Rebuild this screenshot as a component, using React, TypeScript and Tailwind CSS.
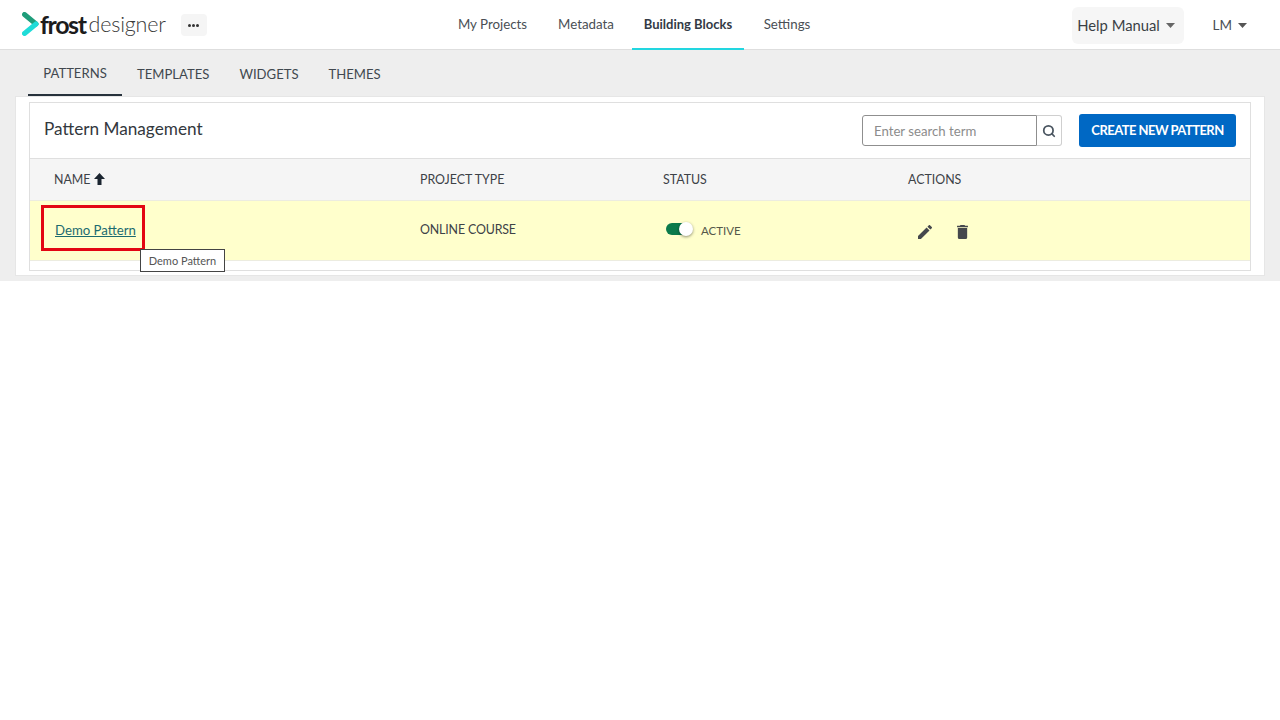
import { Search } from "lucide-react"

const tabs = ["PATTERNS", "TEMPLATES", "WIDGETS", "THEMES"]

const Caret = ({ color }: { color: string }) => (
  <svg width="9" height="5" viewBox="0 0 9 5" className="ml-[6px]">
    <path d="M0 0h9L4.5 5z" fill={color} />
  </svg>
)

const Header = () => (
  <header className="flex h-[50px] items-stretch border-b border-[#dedede] bg-white">
    {/* Logo */}
    <div className="flex w-[446px] items-center pl-[22px]">
      <svg width="17" height="24" viewBox="0 0 17 24" className="mt-[-2px]">
        <path d="M2.5 2.5 L14 12" stroke="#1f9d7a" strokeWidth="5" strokeLinecap="round" fill="none" />
        <path d="M14 12 L2.5 21.5" stroke="#1fdcd8" strokeWidth="5" strokeLinecap="round" fill="none" />
      </svg>
      <span className="ml-[1px] text-[25px] leading-none font-bold tracking-[-1.4px] text-[#1c1c1c]">frost</span>
      <span className="ml-[3px] text-[21.5px] leading-none font-light tracking-[-0.2px] text-[#3a3a3a]">designer</span>
      <span className="ml-[15px] flex h-[22px] w-[26px] items-center justify-center rounded-sm bg-[#f5f5f5]">
        <span className="mt-[2px] flex gap-[1.5px]">
          <i className="h-[2.5px] w-[2.5px] rounded-full bg-[#333]" />
          <i className="h-[2.5px] w-[2.5px] rounded-full bg-[#333]" />
          <i className="h-[2.5px] w-[2.5px] rounded-full bg-[#333]" />
        </span>
      </span>
    </div>
    {/* Main nav */}
    <nav className="flex items-stretch gap-[7px] text-[13.3px] text-[#4a4f55]">
      <a className="flex w-[93px] items-center justify-center">My Projects</a>
      <a className="flex w-[80px] items-center justify-center">Metadata</a>
      <a className="mb-[-1px] ml-[-1px] flex w-[112px] items-center justify-center border-b-2 border-[#22d6e0] pt-[1px] text-[13px] font-bold text-[#333a45]">
        Building Blocks
      </a>
      <a className="ml-[1px] flex w-[70px] items-center justify-center">Settings</a>
    </nav>
    <div className="ml-auto flex items-center pr-[33px]">
      <button className="mt-[1px] flex h-[37px] w-[112px] items-center justify-center rounded-md bg-[#f6f6f6] pt-[1px] pr-[3px] text-[14.8px] text-[#3a3f45]">
        Help Manual
        <Caret color="#666" />
      </button>
      <button className="ml-[29px] flex items-center pt-[1px] text-[13.5px] text-[#4a4f55]">
        LM
        <Caret color="#555" />
      </button>
    </div>
  </header>
)

const App = () => {
  return (
    <div className="min-h-[720px] bg-white font-['Lato',sans-serif]">
      <Header />
      <div className="h-[231px] bg-[#eeeeee] px-[15px]">
        {/* Tabs */}
        <div className="flex h-[46px] pl-[13px] text-[13.1px] text-[#41484f]">
          {tabs.map((t, i) => (
            <a
              key={t}
              className={
                i === 0
                  ? "flex w-[94px] items-center justify-center border-b-2 border-[#27323c] pt-[4px]"
                  : "flex items-center px-[15px] pt-[4px]"
              }
            >
              {t}
            </a>
          ))}
        </div>
        {/* Card */}
        <div className="h-[180px] border border-[#e6e6e6] bg-white px-[13px] pt-[5px]">
          <div className="relative h-[169px] border border-[#dfdfdf]">
            <div className="flex h-[56px] items-center border-b border-[#dfdfdf] px-[14px]">
              <h1 className="mt-[-3px] text-[17.2px] font-normal text-[#33383d]">Pattern Management</h1>
              <div className="mr-[17px] ml-auto flex h-[31px] w-[200px]">
                <input
                  readOnly
                  placeholder="Enter search term"
                  className="h-full w-[175px] rounded-l-[3px] border border-[#8f8f8f] bg-white px-[11px] text-[13.2px] outline-none placeholder:text-[#8c8c8c]"
                />
                <span className="flex h-full w-[25px] items-center justify-center rounded-r-[3px] border border-l-0 border-[#cfcfcf] bg-white">
                  <Search size={14} strokeWidth={3} color="#4a5560" />
                </span>
              </div>
              <button className="h-[33px] w-[157px] rounded-[3px] bg-[#0068c4] text-[13px] font-bold tracking-[-0.55px] text-white">
                CREATE NEW PATTERN
              </button>
            </div>
            {/* Table */}
            <div className="flex h-[41px] items-center bg-[#f5f5f5] pt-[1px] text-[12.4px] text-[#3d4247]">
              <div className="flex w-[390px] items-center pl-[24px]">
                NAME
                <svg width="11" height="12" viewBox="0 0 11 12" className="mt-[-1px] ml-[3px]">
                  <path d="M5.5 0 11 6H7.5v6h-4V6H0z" fill="#1b2530" />
                </svg>
              </div>
              <div className="w-[243px]">PROJECT TYPE</div>
              <div className="w-[245px]">STATUS</div>
              <div>ACTIONS</div>
            </div>
            <div className="flex h-[61px] items-center border-y border-[#ecece0] bg-[#ffffcc] text-[12.4px] text-[#3d4247]">
              <div className="w-[390px] pl-[25px]">
                <a className="text-[13.2px] text-[#1c6b70] underline">Demo Pattern</a>
              </div>
              <div className="w-[243px] tracking-[-0.15px]">ONLINE COURSE</div>
              <div className="flex w-[245px] items-center pl-[3px]">
                <span className="relative mt-[-3px] h-[12px] w-[26px] rounded-full bg-[#0b7a4b]">
                  <span className="absolute top-[-1px] right-[-1px] h-[14px] w-[14px] rounded-full bg-white shadow-[0_1px_3px_rgba(0,0,0,0.45)]" />
                </span>
                <span className="mt-[1px] ml-[9px] text-[11.5px] text-[#55584a]">ACTIVE</span>
              </div>
              <div className="flex items-center pt-[3px] pl-[10px]">
                <svg width="14" height="14" viewBox="3 3 18 18" fill="#45484c">
                  <path d="M3 17.25V21h3.75L17.81 9.94l-3.75-3.75L3 17.25zM20.71 7.04a1 1 0 0 0 0-1.41l-2.34-2.34a1 1 0 0 0-1.41 0l-1.83 1.83 3.75 3.75 1.83-1.83z" />
                </svg>
                <svg width="11" height="14" viewBox="5 3 14 18" fill="#45484c" className="ml-[25px]">
                  <path d="M6 19a2 2 0 0 0 2 2h8a2 2 0 0 0 2-2V7H6v12zM19 4h-3.5l-1-1h-5l-1 1H5v2h14V4z" />
                </svg>
              </div>
            </div>
            {/* Highlight box and tooltip over the row */}
            <div className="absolute top-[102px] left-[11px] h-[46px] w-[104px] border-[3px] border-[#e30613]" />
            <div className="absolute top-[146px] left-[110px] flex h-[23px] w-[85px] items-center justify-center border border-[#444] bg-white pt-[2px] text-[11px] text-[#555]">
              Demo Pattern
            </div>
          </div>
        </div>
      </div>
    </div>
  )
}

export default App
